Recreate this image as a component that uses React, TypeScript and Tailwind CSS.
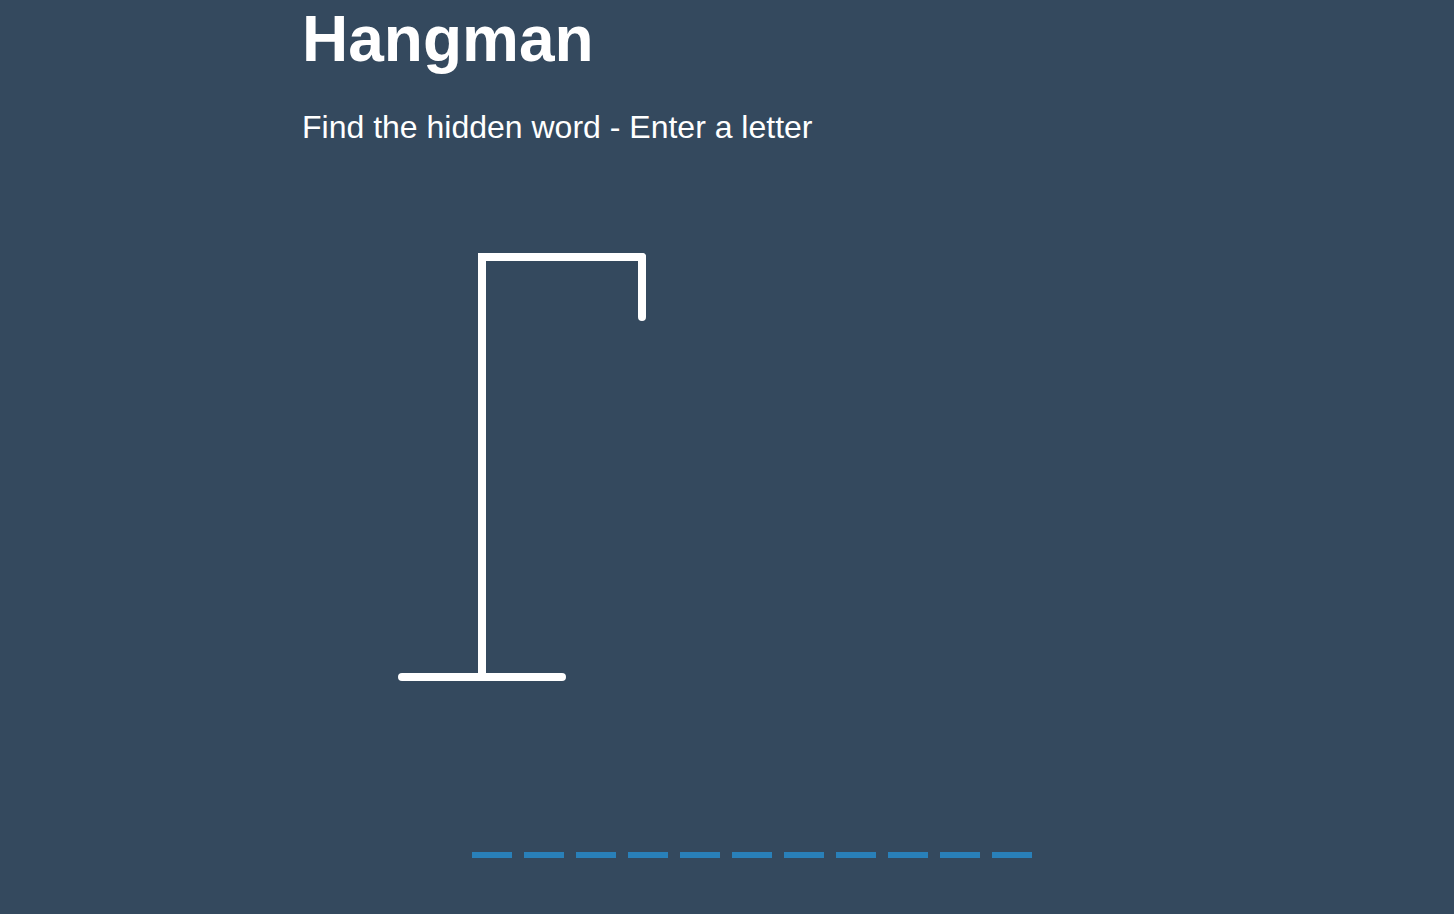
const word = "programming";

const Gallows = () => {
  return (
    <svg
      width="500"
      height="500"
      viewBox="0 0 500 500"
      fill="none"
      stroke="#ffffff"
      strokeWidth="8"
      strokeLinecap="round"
      className="block"
    >
      {/* Rod */}
      <line x1="280" y1="40" x2="280" y2="100" />
      {/* Head */}
      <line x1="124" y1="40" x2="280" y2="40" />
      <line x1="120" y1="40" x2="120" y2="460" strokeLinecap="square" />
      <line x1="40" y1="460" x2="200" y2="460" />
    </svg>
  );
};

export default function App() {
  return (
    <div
      className="min-h-screen w-full overflow-hidden bg-[#34495e] text-white"
      style={{ fontFamily: '"Liberation Sans", Arial, Helvetica, sans-serif' }}
    >
      <div className="flex flex-col pl-[302px]">
        <h1 className="mt-[3px] text-[64px] font-bold leading-[72px]">Hangman</h1>
        <p className="mt-[34px] text-[32px] leading-[36px]">
          Find the hidden word - Enter a letter
        </p>

        <div className="ml-[60px] mt-[72px]">
          <Gallows />
        </div>

        {/* Hidden word */}
        <div className="ml-[170px] mt-[135px] flex gap-[12px]">
          {word.split("").map((_, i) => (
            <span key={i} className="h-[6px] w-[40px] bg-[#2980b9]" />
          ))}
        </div>
      </div>
    </div>
  );
}
